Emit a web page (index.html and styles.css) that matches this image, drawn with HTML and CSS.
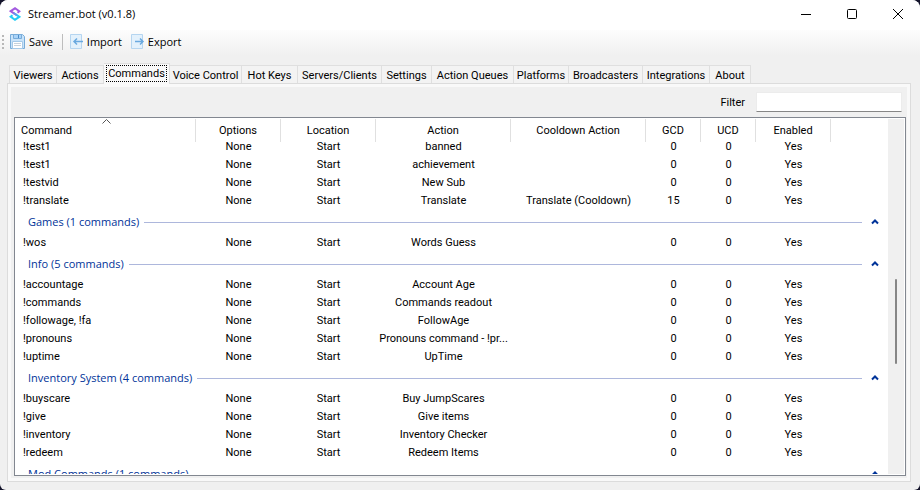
FILE: index.html
```html
<!DOCTYPE html>
<html lang="en">
<head>
<meta charset="utf-8">
<title>Streamer.bot (v0.1.8)</title>
<link rel="stylesheet" href="styles.css">
</head>
<body>
<div class="window">
  <header class="titlebar">
    <svg class="logo" width="12" height="14" viewBox="0 0 12 14" fill="none" stroke-width="2">
      <path d="M8.500 5.800 10.300 4.300 6 1.300 1.600 4.200 6 7.200" stroke="#a35be0"/>
      <path d="M3.500 8.200 1.700 9.700 6 12.700 10.400 9.800 6 6.800" stroke="#22cdf5"/>
      <path d="M4.300 5.800 7.700 8.200" stroke="#6f8fea"/>
    </svg>
    <h1 class="title">Streamer.bot (v0.1.8)</h1>
    <div class="controls">
      <button class="control" aria-label="Minimize"><svg width="10" height="10"><path d="M0 5.500h10"/></svg></button>
      <button class="control" aria-label="Maximize"><svg width="10" height="10"><rect x=".5" y=".5" width="9" height="9" rx="1"/></svg></button>
      <button class="control" aria-label="Close"><svg width="10" height="10"><path d="M0 0l10 10M10 0L0 10"/></svg></button>
    </div>
  </header>

  <div class="toolbar">
    <span class="grip"></span>
    <button class="tool">
      <svg width="16" height="16" viewBox="0 0 16 16"><path d="M.5.5h12l2 2v12H.5z" fill="#c9e3f9" stroke="#78acd9"/><path d="M3.500.5h8v4h-8z" fill="#a9d3f8" stroke="#78acd9"/><path d="M8 1h1v3H8z" fill="#4a8cc9"/><path d="M2.500 7.500h10v7h-10z" fill="#fff" stroke="#a5c9e8"/><path d="M4 9.500h7M4 11.500h7" stroke="#c8d2db"/></svg>
      Save
    </button>
    <span class="divider"></span>
    <button class="tool">
      <svg width="14" height="16" viewBox="0 0 14 16"><path d="M.5.5h11v14H.5z" fill="#e3f1fc" stroke="#b5d5f0"/><path d="M4 7.500h9M7 4.500l-3 3 3 3" fill="none" stroke="#6aa9df" stroke-width="1.500"/></svg>
      Import
    </button>
    <button class="tool">
      <svg width="14" height="16" viewBox="0 0 14 16"><path d="M.5.5h11v14H.5z" fill="#e3f1fc" stroke="#b5d5f0"/><path d="M4 7.500h8M9 4.500l3 3-3 3" fill="none" stroke="#6aa9df" stroke-width="1.500"/></svg>
      Export
    </button>
  </div>

  <nav class="tabs" role="tablist">
    <button class="tab" role="tab">Viewers</button>
    <button class="tab" role="tab">Actions</button>
    <button class="tab selected" role="tab" aria-selected="true"><span class="focus">Commands</span></button>
    <button class="tab" role="tab">Voice Control</button>
    <button class="tab" role="tab">Hot Keys</button>
    <button class="tab" role="tab">Servers/Clients</button>
    <button class="tab" role="tab">Settings</button>
    <button class="tab" role="tab">Action Queues</button>
    <button class="tab" role="tab">Platforms</button>
    <button class="tab" role="tab">Broadcasters</button>
    <button class="tab" role="tab">Integrations</button>
    <button class="tab" role="tab">About</button>
  </nav>

  <main class="panel">
    <div class="filter">
      <label for="filter">Filter</label>
      <input id="filter" type="text">
    </div>
    <div class="list">
      <div class="viewport">
        <table>
          <colgroup><col class="c-command"><col class="c-options"><col class="c-location"><col class="c-action"><col class="c-action"><col class="c-cd"><col class="c-cd"><col class="c-enabled"><col></colgroup>
          <thead>
            <tr><th>Command<svg class="sort" width="9" height="5"><path d="M.5 4.500l4-4 4 4"/></svg></th><th>Options</th><th>Location</th><th>Action</th><th>Cooldown Action</th><th>GCD</th><th>UCD</th><th>Enabled</th><th></th></tr>
          </thead>
          <tbody>
            <tr class="cut"><td>!test1</td><td>None</td><td>Start</td><td>banned</td><td></td><td>0</td><td>0</td><td>Yes</td><td></td></tr>
            <tr><td>!test1</td><td>None</td><td>Start</td><td>achievement</td><td></td><td>0</td><td>0</td><td>Yes</td><td></td></tr>
            <tr><td>!testvid</td><td>None</td><td>Start</td><td>New Sub</td><td></td><td>0</td><td>0</td><td>Yes</td><td></td></tr>
            <tr><td>!translate</td><td>None</td><td>Start</td><td>Translate</td><td>Translate (Cooldown)</td><td>15</td><td>0</td><td>Yes</td><td></td></tr>
            <tr class="group"><th colspan="9"><div class="group-head">Games (1 commands)<span class="rule"></span><button class="fold" aria-label="Collapse Games"><svg width="8" height="6"><path d="M1 4.500l3-3 3 3"/></svg></button></div></th></tr>
            <tr><td>!wos</td><td>None</td><td>Start</td><td>Words Guess</td><td></td><td>0</td><td>0</td><td>Yes</td><td></td></tr>
            <tr class="group"><th colspan="9"><div class="group-head">Info (5 commands)<span class="rule"></span><button class="fold" aria-label="Collapse Info"><svg width="8" height="6"><path d="M1 4.500l3-3 3 3"/></svg></button></div></th></tr>
            <tr><td>!accountage</td><td>None</td><td>Start</td><td>Account Age</td><td></td><td>0</td><td>0</td><td>Yes</td><td></td></tr>
            <tr><td>!commands</td><td>None</td><td>Start</td><td>Commands readout</td><td></td><td>0</td><td>0</td><td>Yes</td><td></td></tr>
            <tr><td>!followage, !fa</td><td>None</td><td>Start</td><td>FollowAge</td><td></td><td>0</td><td>0</td><td>Yes</td><td></td></tr>
            <tr><td>!pronouns</td><td>None</td><td>Start</td><td>Pronouns command - !pr...</td><td></td><td>0</td><td>0</td><td>Yes</td><td></td></tr>
            <tr><td>!uptime</td><td>None</td><td>Start</td><td>UpTime</td><td></td><td>0</td><td>0</td><td>Yes</td><td></td></tr>
            <tr class="group"><th colspan="9"><div class="group-head">Inventory System (4 commands)<span class="rule"></span><button class="fold" aria-label="Collapse Inventory System"><svg width="8" height="6"><path d="M1 4.500l3-3 3 3"/></svg></button></div></th></tr>
            <tr><td>!buyscare</td><td>None</td><td>Start</td><td>Buy JumpScares</td><td></td><td>0</td><td>0</td><td>Yes</td><td></td></tr>
            <tr><td>!give</td><td>None</td><td>Start</td><td>Give items</td><td></td><td>0</td><td>0</td><td>Yes</td><td></td></tr>
            <tr><td>!inventory</td><td>None</td><td>Start</td><td>Inventory Checker</td><td></td><td>0</td><td>0</td><td>Yes</td><td></td></tr>
            <tr><td>!redeem</td><td>None</td><td>Start</td><td>Redeem Items</td><td></td><td>0</td><td>0</td><td>Yes</td><td></td></tr>
            <tr class="group"><th colspan="9"><div class="group-head">Mod Commands (1 commands)<span class="rule"></span><button class="fold" aria-label="Collapse Mod Commands"><svg width="8" height="6"><path d="M1 4.500l3-3 3 3"/></svg></button></div></th></tr>
          </tbody>
        </table>
      </div>
      <div class="scrollbar"><span class="before"></span><span class="thumb"></span><span class="after"></span></div>
    </div>
  </main>
</div>
</body>
</html>
```

FILE: styles.css
```css
* { box-sizing: border-box; }

body {
  margin: 0;
  background: #14142b;
  color: #000;
  font: 11px/18px Roboto, sans-serif;
}

button {
  margin: 0;
  padding: 0;
  border: 0;
  background: none;
  color: inherit;
  font: inherit;
}

svg { flex: none; }

.window {
  display: flex;
  flex-direction: column;
  height: 100vh;
  overflow: hidden;
  border-radius: 8px 8px 6px 6px;
  background: #f0f0f0;
}

.titlebar {
  display: flex;
  align-items: center;
  height: 30px;
  padding: 0 0 2px 9px;
  background: #fff;
}

.title {
  flex: 1;
  margin: 0 0 0 7px;
  font: 11px/28px "Open Sans", sans-serif;
}

.controls { display: flex; }

.control {
  display: grid;
  place-items: center;
  width: 46px;
  height: 28px;
  padding-left: 2px;
}

.control svg {
  overflow: visible;
  fill: none;
  stroke: #000;
}

.toolbar {
  display: flex;
  align-items: center;
  height: 26px;
  padding: 0 0 2px 2px;
  background: linear-gradient(#fdfdfd, #f0f0f0);
  font: 11px/24px "Open Sans", sans-serif;
}

.grip {
  width: 2px;
  height: 14px;
  margin-right: 6px;
  background: repeating-linear-gradient(#b8b8b8 0 2px, transparent 2px 4px);
}

.tool {
  display: flex;
  align-items: center;
  gap: 3px;
  margin-right: 9px;
}

.divider {
  width: 1px;
  height: 16px;
  margin-right: 7px;
  background: #bdbdbd;
}

.tabs {
  display: grid;
  grid-template-columns: 48px 47px 66px 72px 56px 84px 50px 82px 55px 74px 67px 41px;
  align-items: end;
  height: 21px;
  margin: 7px 9px -1px;
}

.tab {
  height: 19px;
  padding-top: 1px;
  border: 1px solid #dfdfdf;
  border-left-width: 0;
  background: #f3f3f3;
  white-space: nowrap;
}

.tab:first-child { border-left-width: 1px; }

.tab.selected {
  z-index: 1;
  height: 21px;
  padding: 1px 2px 2px;
  border-bottom: 0;
  background: #f9f9f9;
}

.focus {
  display: block;
  height: 17px;
  border: 1px dotted #000;
  line-height: 15px;
}

.panel {
  display: flex;
  flex: 1;
  flex-direction: column;
  min-height: 0;
  margin: 0 9px 8px 7px;
  padding: 8px 4px 5px 3px;
  border: 1px solid #dcdcdc;
  box-shadow: inset 0 0 0 3px #f9f9f9;
  background: #f0f0f0;
}

.filter {
  display: flex;
  align-items: center;
  justify-content: flex-end;
  gap: 11px;
  height: 20px;
  margin: 0 4px 5px 0;
}

.filter label { padding-top: 2px; }

.filter input {
  width: 146px;
  height: 20px;
  border: 1px solid #ececec;
  border-bottom-color: #868686;
  background: #fff;
  font: inherit;
}

.list {
  display: flex;
  flex: 1;
  min-height: 0;
  margin-left: 3px;
  padding: 1px;
  border: 1px solid #828790;
  background: #fff;
}

.viewport {
  flex: 1;
  overflow: hidden;
}

table {
  width: 100%;
  border-collapse: separate;
  border-spacing: 0;
  table-layout: fixed;
}

.c-command { width: 180px; }
.c-options { width: 85px; }
.c-location { width: 95px; }
.c-action { width: 135px; }
.c-cd { width: 55px; }
.c-enabled { width: 75px; }

th, td {
  height: 18px;
  padding: 0;
  font-weight: normal;
  text-align: center;
  white-space: nowrap;
}

th:first-child, td:first-child { text-align: left; }

thead th {
  position: relative;
  height: 23px;
  border-right: 1px solid #e0e0e0;
  line-height: 23px;
}

thead th:last-child { border-right: 0; }
thead th:first-child { padding-left: 5px; }
td:first-child { padding-left: 7px; }

.sort {
  position: absolute;
  top: 0;
  left: calc(50% - 4px);
  fill: none;
  stroke: #555;
}

.cut td {
  height: 14px;
  line-height: 10px;
  vertical-align: top;
}

.group-head {
  display: flex;
  align-items: center;
  height: 24px;
  padding: 0 9px 0 12px;
  color: #003399;
  font: 11px/24px "Open Sans", sans-serif;
}

.rule {
  flex: 1;
  height: 1px;
  margin: 0 9px 0 5px;
  background: #adb7dc;
}

.fold { display: flex; }

.fold svg {
  fill: none;
  stroke: #003399;
  stroke-width: 2;
}

.scrollbar {
  display: flex;
  flex-direction: column;
  align-items: center;
  width: 16px;
  background: #f0f0f0;
}

.before { flex: 160; }
.after { flex: 110; }

.thumb {
  flex: 84;
  width: 2px;
  border-radius: 1px;
  background: #868686;
}
```
